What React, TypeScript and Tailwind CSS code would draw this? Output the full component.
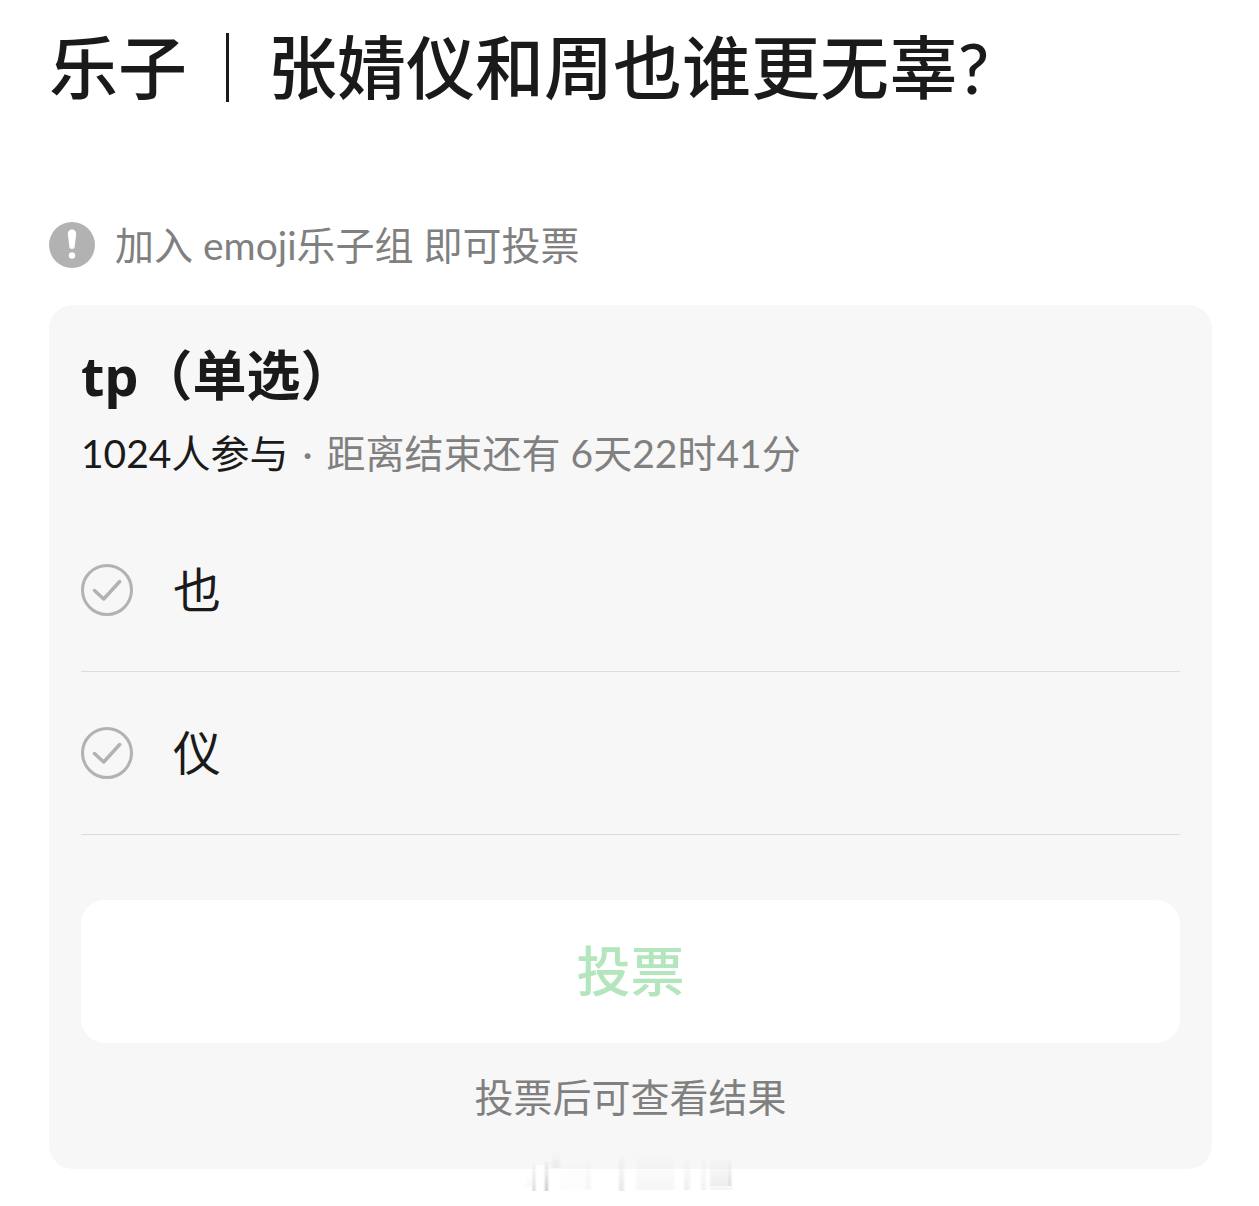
import { useState, FormEvent } from 'react';

const options = ['也', '仪'];

// x, y, width, height, opacity of each blurred stroke
const strokes = [
  [13, 14, 2, 28, 0.32],
  [25, 12, 3, 30, 0.34],
  [32, 3, 8, 16, 0.07],
  [6, 26, 6, 12, 0.03],
  [40, 12, 28, 28, 0.015],
  [66, 10, 5, 31, 0.05],
  [99, 8, 5, 34, 0.14],
  [116, 7, 38, 34, 0.05],
  [164, 10, 6, 31, 0.09],
  [181, 10, 5, 31, 0.08],
  [190, 11, 21, 26, 0.1],
  [209, 11, 2, 26, 0.18],
  [190, 36, 23, 5, 0.07],
];

function Smudge() {
  return (
    <svg className="absolute -bottom-6 left-1/2 -ml-[111px] h-11 w-[220px]" viewBox="0 0 220 44" aria-hidden="true">
      <defs>
        <linearGradient id="fade" x1="0" y1="0" x2="0" y2="1">
          <stop offset="0" stopColor="#555" stopOpacity="0.1" />
          <stop offset="1" stopColor="#555" />
        </linearGradient>
        <filter id="soft" x="-200%" y="-20%" width="500%" height="140%">
          <feGaussianBlur stdDeviation="1.2 0.5" />
        </filter>
      </defs>
      <rect x="15" y="16" width="10" height="26" fill="#fff" opacity="0.8" filter="url(#soft)" />
      {strokes.map(([x, y, width, height, opacity]) => (
        <rect key={`${x}-${y}`} x={x} y={y} width={width} height={height} opacity={opacity} fill="url(#fade)" filter="url(#soft)" />
      ))}
    </svg>
  );
}

export default function App() {
  const [selected, setSelected] = useState('');

  const handleVote = (event: FormEvent) => {
    event.preventDefault();
  };

  return (
    <main className="pl-[49px] pr-[47px] pt-8 pb-9 bg-white text-[#1a1a1a] font-['Lato','Noto_Sans_CJK_SC',sans-serif]">
      <h1 className="text-[69px] leading-[72px] font-medium">
        乐子<span className="mx-[6px]">｜</span>张婧仪和周也谁更无辜?
      </h1>
      <p className="mt-[117px] flex items-center gap-5 text-[39px] leading-[48px] text-[#808080]">
        <svg className="size-[46px] shrink-0" viewBox="0 0 46 46" aria-hidden="true">
          <circle cx="23" cy="23" r="23" fill="#b2b2b2" />
          <path d="M18.800 11.800a4.200 4.200 0 0 1 8.400 0l-1.500 12.500a2.700 2.700 0 0 1-5.400 0z" fill="#fff" />
          <circle cx="23" cy="33.500" r="3.200" fill="#fff" />
        </svg>
        加入 emoji乐子组 即可投票
      </p>
      <form onSubmit={handleVote} className="relative mt-9 rounded-3xl bg-[#f7f7f7] px-8 pt-[38px] pb-12">
        <h2 className="text-[54px] leading-[64px] font-bold font-['Noto_Sans','Noto_Sans_CJK_SC',sans-serif]">tp（单选）</h2>
        <p className="mt-[22px] text-[39px] leading-[48px] text-[#808080]">
          <span className="text-[#1a1a1a]">1024人参与</span> <span className="mx-1">·</span> 距离结束还有 6天22时41分
        </p>
        <div className="mt-8">
          {options.map((option) => (
            <label key={option} className="flex h-[163px] items-center gap-10 border-b border-[#dcdcdc] text-[48px] leading-[60px]">
              <input
                type="radio"
                name="vote"
                value={option}
                checked={selected === option}
                onChange={() => setSelected(option)}
                className="peer sr-only"
              />
              <svg className="size-[52px] shrink-0 text-[#b2b2b2] peer-checked:text-green-500" viewBox="0 0 52 52" fill="none" stroke="currentColor" strokeWidth="3" aria-hidden="true">
                <circle cx="26" cy="26" r="24.500" />
                <path d="M13.500 26.500l9.200 8.500 16-17.500" strokeWidth="3.500" strokeLinecap="round" strokeLinejoin="round" />
              </svg>
              {option}
            </label>
          ))}
        </div>
        <button type="submit" className="mt-[65px] h-[143px] w-full rounded-3xl bg-white text-[54px] font-medium text-[#b3e6bd]">
          投票
        </button>
        <p className="mt-[30px] text-center text-[39px] leading-[48px] text-[#808080]">投票后可查看结果</p>
        <Smudge />
      </form>
    </main>
  );
}
